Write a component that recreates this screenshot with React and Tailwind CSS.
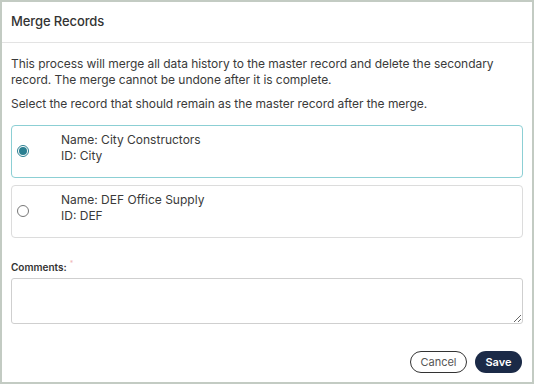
export default function App() {
  const font = { fontFamily: "Inter, 'Liberation Sans', sans-serif" };
  return (
    <div className="w-[534px] h-[384px] bg-white border-2 border-[#c3cbc3] flex flex-col text-[#333]" style={font}>
      <div className="h-[41px] shrink-0 flex items-center px-[9px] border-b border-[#e3e3e3]">
        <span className="text-[13px] font-medium text-[#333] tracking-[-0.1px]">Merge Records</span>
      </div>
      <div className="px-[9px] pt-[13px] flex flex-col">
        <p className="text-[12px] leading-[16px] text-[#3a3a3a] tracking-[-0.05px]">
          This process will merge all data history to the master record and delete the secondary record. The merge cannot be undone after it is complete.
        </p>
        <p className="text-[12px] leading-[16px] text-[#3a3a3a] mt-[8px] tracking-[-0.05px]">
          Select the record that should remain as the master record after the merge.
        </p>
        <div className="mt-[13px] h-[53px] shrink-0 border border-[#8ccfd4] rounded-[4px] flex">
          <div className="w-[49px] flex items-center pl-[5px]">
            <span className="w-[12px] h-[12px] rounded-full border border-[#2a7f91] flex items-center justify-center mt-[-2px]">
              <span className="w-[8px] h-[8px] rounded-full bg-[#2a7f91]"></span>
            </span>
          </div>
          <div className="pt-[6px] text-[12px] leading-[16px] text-[#3a3a3a]">
            <div>Name: City Constructors</div>
            <div>ID: City</div>
          </div>
        </div>
        <div className="mt-[7px] h-[53px] shrink-0 border border-[#dcdcdc] rounded-[4px] flex">
          <div className="w-[49px] flex items-center pl-[5px]">
            <span className="w-[12px] h-[12px] rounded-full border border-[#777] mt-[-2px]"></span>
          </div>
          <div className="pt-[6px] text-[12px] leading-[16px] text-[#3a3a3a]">
            <div>Name: DEF Office Supply</div>
            <div>ID: DEF</div>
          </div>
        </div>
        <div className="mt-[22px] flex items-start h-[14px]">
          <span className="text-[10px] leading-[14px] font-semibold text-[#333]">Comments:</span>
          <span className="ml-[3px] text-[7px] leading-[8px] text-[#f0b8b8]">*</span>
        </div>
        <textarea className="mt-[4px] h-[46px] w-full border border-[#cfcfcf] rounded-[3px] resize-y outline-none text-[12px] p-[4px]"></textarea>
        <div className="mt-[27px] flex justify-end gap-[8px] pr-[1px]">
          <button className="h-[22px] w-[57px] rounded-full border border-[#333] text-[11px] text-[#555] bg-white">Cancel</button>
          <button className="h-[22px] w-[47px] rounded-full bg-[#1b2a47] text-[11px] font-semibold text-white">Save</button>
        </div>
      </div>
    </div>
  );
}
